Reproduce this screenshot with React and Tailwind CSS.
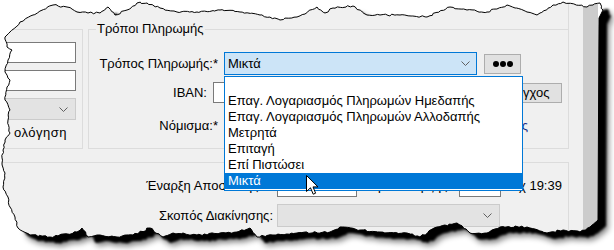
import React from "react";

const font = { fontFamily: '"Liberation Sans", Arial, sans-serif' };

// torn paper outline (anchor points, straight = no jitter)
const TOP = [
  [10, 32], [20, 22], [33, 15], [53, 5], [67, 7], [77, 12], [88, 13], [100, 13], [108, 7], [115, 15],
  [127, 10], [137, 3], [147, 3], [160, 8], [177, 12], [197, 12], [220, 10], [240, 12], [260, 15],
  [280, 20], [297, 17], [317, 7], [325, 13], [333, 8], [353, 6], [367, 15], [380, 15], [400, 15],
  [427, 17], [450, 7], [467, 10], [487, 12], [507, 5], [527, 12], [537, 15], [553, 5], [563, 2],
  [587, 7], [600, 3],
];
const RIGHT = [[603, 10, 1], [599, 18, 1], [598, 220]];
const BOTTOM = [
  [590, 227], [580, 232], [563, 230], [547, 233], [527, 227], [500, 227], [487, 233], [470, 233],
  [457, 223], [437, 227], [420, 237], [407, 233], [380, 232], [360, 230], [340, 227], [330, 232],
  [297, 233], [273, 235], [257, 237], [250, 228], [237, 232], [220, 233], [197, 235], [173, 233],
  [163, 237], [150, 228], [133, 235], [117, 237], [100, 235], [88, 237], [82, 228], [77, 232],
  [50, 237], [30, 235], [18, 228],
];
const LEFT = [
  [15, 217], [10, 207], [8, 197], [3, 187], [5, 173], [2, 163], [3, 150], [5, 140], [10, 133],
  [8, 120], [10, 110], [5, 100], [7, 87], [10, 80], [5, 72], [8, 60], [12, 50], [7, 47], [5, 37],
];

const rnd = (k) => {
  const v = Math.sin(k * 127.1 + 311.7) * 43758.5453;
  return (v - Math.floor(v)) * 2 - 1;
};

const buildPaper = () => {
  const pts = [...TOP, ...RIGHT, ...BOTTOM, ...LEFT];
  const out = [];
  let k = 1;
  for (let i = 0; i < pts.length; i++) {
    const a = pts[i];
    const b = pts[(i + 1) % pts.length];
    out.push([a[0], a[1]]);
    if (a[2]) continue;
    const d = Math.hypot(b[0] - a[0], b[1] - a[1]);
    const steps = Math.floor(d / 2.5);
    for (let s = 1; s < steps; s++) {
      const t = s / steps;
      out.push([a[0] + (b[0] - a[0]) * t + rnd(k++) * 0.8, a[1] + (b[1] - a[1]) * t + rnd(k++) * 0.9]);
    }
  }
  return "M" + out.map((p) => p[0].toFixed(1) + " " + p[1].toFixed(1)).join("L") + "Z";
};

const paper = buildPaper();
const outside = "M0 0H614V250H0Z " + paper;

const Chevron = () => (
  <svg width="9" height="5" viewBox="0 0 9 5" className="shrink-0">
    <polyline points="0.5,0.5 4.5,4.5 8.5,0.5" fill="none" stroke="#606060" strokeWidth="1" />
  </svg>
);

const TextBox = ({ className = "" }) => (
  <div className={`bg-white border border-[#7a7a7a] ${className}`} />
);

const DisabledCombo = ({ className = "" }) => (
  <div className={`flex items-center justify-end pr-[7px] bg-[#e3e3e3] border border-[#cbcbcb] ${className}`}>
    <Chevron />
  </div>
);

const items = [
  "",
  "Επαγ. Λογαριασμός Πληρωμών Ημεδαπής",
  "Επαγ. Λογαριασμός Πληρωμών Αλλοδαπής",
  "Μετρητά",
  "Επιταγή",
  "Επί Πιστώσει",
  "Μικτά",
];

export default function App() {
  return (
    <div className="relative w-[614px] h-[250px] overflow-hidden bg-white text-[13px] text-black" style={font}>
      <div className="flex h-full">
        <div className="w-[583px] h-full bg-[#f0f0f0] overflow-hidden flex flex-col">
          <div className="h-[29px] shrink-0">
            <div className="w-[569px] h-full border-r border-[#dcdcdc]" />
          </div>

          {/* top groups */}
          <div className="flex shrink-0">
            <div className="-ml-[10px] w-[93px] h-[120px] border border-[#dcdcdc] flex flex-col items-end pt-[12px] pr-[6px]">
              <TextBox className="w-[80px] h-[21px]" />
              <TextBox className="w-[80px] h-[21px] mt-[7px]" />
              <DisabledCombo className="w-[80px] h-[22px] mt-[7px]" />
              <div className="mt-[6px] mr-[9px] leading-[14px] whitespace-nowrap tracking-[0.5px]">ολόγηση</div>
            </div>

            <div className="ml-[5px] w-[481px] h-[120px] border border-[#dcdcdc] relative">
              <div className="absolute -top-[8px] left-[7px] px-[1px] bg-[#f0f0f0] leading-[14px]">Τρόποι Πληρωμής</div>

              <div className="mt-[22px] h-[23px] flex items-center">
                <div className="w-[129px] text-right whitespace-nowrap">Τρόπος Πληρωμής:*</div>
                <div className="ml-[6px] w-[253px] h-[23px] bg-[#cce4f7] border border-[#0078d7] flex items-center justify-between pl-[3px] pr-[6px]">
                  <span>Μικτά</span>
                  <Chevron />
                </div>
                <div className="ml-[7px] w-[37px] h-[20px] bg-[#e1e1e1] border border-[#adadad] flex items-center justify-center gap-[1px]">
                  <span className="w-[6px] h-[6px] rounded-full bg-black" />
                  <span className="w-[6px] h-[6px] rounded-full bg-black" />
                  <span className="w-[6px] h-[6px] rounded-full bg-black" />
                </div>
              </div>

              <div className="mt-[6px] h-[23px] flex items-center">
                <div className="w-[118px] text-right">IBAN:</div>
                <TextBox className="ml-[6px] w-[260px] h-[21px]" />
                <div className="ml-[15px] w-[74px] h-[20px] bg-[#e1e1e1] border border-[#adadad] flex items-center justify-center">
                  Έλεγχος
                </div>
              </div>

              <div className="mt-[10px] h-[23px] flex items-center">
                <div className="w-[129px] text-right whitespace-nowrap">Νόμισμα:*</div>
                <DisabledCombo className="ml-[6px] w-[100px] h-[22px]" />
                <div className="w-[204px] text-right text-[#1c2f86]">Ισοτιμίας</div>
              </div>
            </div>
          </div>

          {/* lower group */}
          <div className="mt-[13px] -ml-[10px] w-[579px] h-[100px] border-t border-r border-[#dcdcdc] shrink-0">
            <div className="mt-[12px] h-[22px] flex items-center">
              <div className="w-[272px] text-right whitespace-nowrap">Έναρξη Αποστολής:</div>
              <TextBox className="ml-[15px] w-[80px] h-[22px]" />
              <div className="w-[102px] text-right pr-[8px] whitespace-nowrap">Ώρα Έναρξης:</div>
              <TextBox className="w-[42px] h-[22px]" />
              <div className="ml-[9px] whitespace-nowrap">πχ 19:39</div>
            </div>
            <div className="mt-[7px] h-[23px] flex items-center">
              <div className="w-[283px] text-right whitespace-nowrap">Σκοπός Διακίνησης:</div>
              <DisabledCombo className="ml-[4px] w-[223px] h-[23px]" />
            </div>
          </div>
        </div>
        <div className="w-[15px] h-full bg-[#cccccc]" />
        <div className="flex-1 bg-white" />
      </div>

      {/* open dropdown list */}
      <div className="absolute left-[224px] top-[76px] w-[299px] bg-white border border-[#0078d7] pb-[1px]">
        {items.map((t, i) => (
          <div
            key={i}
            className={`h-[16px] leading-[16px] pl-[3px] whitespace-nowrap ${
              t === "Μικτά" ? "bg-[#0078d7] text-white" : ""
            }`}
          >
            {t}
          </div>
        ))}
      </div>

      {/* mouse cursor */}
      <svg className="absolute left-[306px] top-[175px]" width="13" height="21" viewBox="0 0 13 21">
        <path d="M0.5 0.5 L0.5 16.5 L4.5 12.8 L7.2 19.2 L9.6 18.2 L7 11.9 L12 11.9 Z" fill="#fff" stroke="#000" strokeWidth="1" strokeLinejoin="round" />
      </svg>

      {/* torn paper edge with shadow */}
      <svg className="absolute inset-0" width="614" height="250" viewBox="0 0 614 250">
        <defs>
          <clipPath id="outside">
            <path d={outside} clipRule="evenodd" />
          </clipPath>
          <filter id="soft" x="-10%" y="-10%" width="120%" height="120%">
            <feGaussianBlur stdDeviation="3" />
          </filter>
          <filter id="hard" x="-10%" y="-10%" width="120%" height="120%">
            <feGaussianBlur stdDeviation="1" />
          </filter>
        </defs>
        <path d={outside} fill="#fff" fillRule="evenodd" />
        <g clipPath="url(#outside)">
          <path d={paper} transform="translate(10 9)" fill="#000" opacity="0.55" filter="url(#soft)" />
          <path d={paper} transform="translate(8 6)" fill="#000" filter="url(#hard)" />
        </g>
        <path d={paper} fill="none" stroke="#000" strokeWidth="1" />
      </svg>
    </div>
  );
}
